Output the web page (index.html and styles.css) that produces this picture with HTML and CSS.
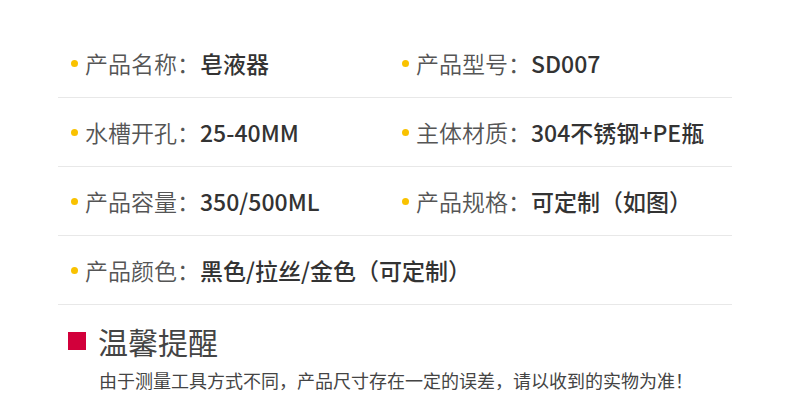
FILE: index.html
```html
<!DOCTYPE html>
<html lang="zh">
<head>
<meta charset="utf-8">
<link rel="stylesheet" href="styles.css">
</head>
<body>
<div class="page">
  <div class="specs">
    <div class="row">
      <div class="item left"><span class="dot"></span><span class="label">产品名称：</span><span class="value">皂液器</span></div>
      <div class="item"><span class="dot"></span><span class="label">产品型号：</span><span class="value">SD007</span></div>
    </div>
    <div class="row">
      <div class="item left"><span class="dot"></span><span class="label">水槽开孔：</span><span class="value">25-40MM</span></div>
      <div class="item"><span class="dot"></span><span class="label">主体材质：</span><span class="value">304不锈钢+PE瓶</span></div>
    </div>
    <div class="row">
      <div class="item left"><span class="dot"></span><span class="label">产品容量：</span><span class="value">350/500ML</span></div>
      <div class="item"><span class="dot"></span><span class="label">产品规格：</span><span class="value">可定制（如图）</span></div>
    </div>
    <div class="row">
      <div class="item left"><span class="dot"></span><span class="label">产品颜色：</span><span class="value">黑色/拉丝/金色（可定制）</span></div>
    </div>
  </div>
  <div class="notice">
    <div class="notice-title"><span class="mark"></span><span>温馨提醒</span></div>
    <p class="notice-text">由于测量工具方式不同，产品尺寸存在一定的误差，请以收到的实物为准！</p>
  </div>
</div>
</body>
</html>
```

FILE: styles.css
```css
html, body {
  margin: 0;
  padding: 0;
  background: #ffffff;
}

body {
  font-family: "Noto Sans CJK SC", "Noto Sans", sans-serif;
}

.page {
  width: 790px;
  height: 406px;
  overflow: hidden;
}

.specs {
  margin-left: 58px;
  width: 674px;
  padding-top: 29px;
}

.row {
  display: flex;
  align-items: center;
  height: 68px;
  border-bottom: 1px solid #e8e8e8;
}

.item {
  display: flex;
  align-items: center;
  padding-left: 13px;
  font-size: 23px;
  line-height: 30px;
  white-space: nowrap;
}

.item.left {
  width: 331px;
  box-sizing: border-box;
}

.dot {
  width: 7px;
  height: 7px;
  border-radius: 50%;
  background: #f9c200;
  margin-right: 7px;
  flex: none;
}

.label {
  color: #555555;
  font-weight: 350;
}

.value {
  color: #333333;
  font-weight: 500;
}

.notice {
  margin-left: 68px;
  padding-top: 21px;
}

.notice-title {
  display: flex;
  align-items: center;
  gap: 12px;
  font-size: 30px;
  line-height: 30px;
  color: #444444;
}

.mark {
  width: 18px;
  height: 18px;
  background: #d2003b;
  flex: none;
}

.notice-text {
  margin: 15px 0 0 31px;
  font-size: 18px;
  line-height: 18px;
  color: #444444;
  white-space: nowrap;
}
```
